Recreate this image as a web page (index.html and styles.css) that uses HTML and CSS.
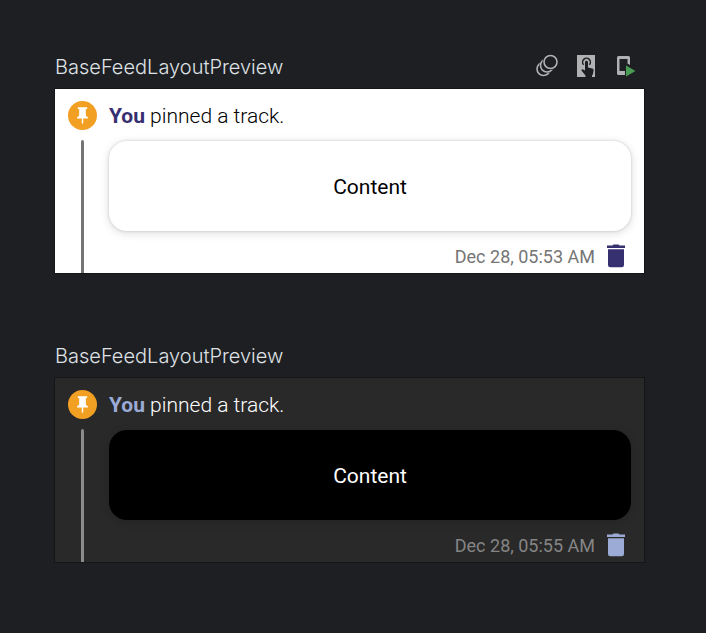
FILE: index.html
```html
<!DOCTYPE html>
<html lang="en">
<head>
  <meta charset="UTF-8">
  <title>BaseFeedLayoutPreview</title>
  <link rel="stylesheet" href="styles.css">
</head>
<body>

  <svg class="symbols" aria-hidden="true">
    <symbol id="pin" viewBox="0 0 28 28">
      <circle cx="14" cy="14" r="14" fill="#f2a024"/>
      <path d="M9.500 6h9v1.800h-1.300v5.200c0 1.400.8 2.200 2 2.400v1.400h-4.500v4.400l-.7 1-.7-1v-4.400H8.800v-1.400c1.200-.2 2-1 2-2.400V7.800H9.500z" fill="#fff"/>
    </symbol>
    <symbol id="trash" viewBox="0 0 18 24">
      <path d="M5.500 1.500 6.500.5h5l1 1H18V4H0V1.500z" fill="currentColor"/>
      <path d="M1 5.300h16V21a2.300 2.300 0 0 1-2.300 2.300H3.300A2.300 2.300 0 0 1 1 21z" fill="currentColor"/>
    </symbol>
  </svg>

  <main class="previews">
    <section class="preview">
      <header class="preview-header">
        <h2 class="preview-title">BaseFeedLayoutPreview</h2>
        <div class="toolbar">
          <button class="tool" aria-label="Animation preview">
            <svg viewBox="0 0 24 24">
              <g fill="#1e1f22" stroke="#afb1b3" stroke-width="1.600">
                <circle cx="9.500" cy="15" r="6.500"/>
                <circle cx="13" cy="11.500" r="7.600" stroke="none"/>
                <circle cx="13" cy="11.500" r="6.500"/>
                <circle cx="16.500" cy="8" r="8" stroke="none"/>
                <circle cx="16.500" cy="8" r="6.500"/>
              </g>
            </svg>
          </button>
          <button class="tool" aria-label="Interactive mode">
            <svg viewBox="0 0 24 24">
              <path d="M3 1h18v22H3z" fill="#afb1b3"/>
              <path d="M9.600 10.800A3.900 3.900 0 1 1 15.400 10.800" fill="none" stroke="#1e1f22" stroke-width="1.500"/>
              <path d="M11 8.200c0-.9.600-1.500 1.500-1.500s1.500.6 1.500 1.500v5.300l4.200 1c1 .2 1.500.9 1.400 1.800L19 20c-.2.700-.5 1.100-1 1.500V23h-6.500v-1.500L7.600 16.800c-.5-.9.600-2 1.500-1.400l1.900 1.100z" fill="#1e1f22"/>
            </svg>
          </button>
          <button class="tool" aria-label="Run preview">
            <svg viewBox="0 0 24 24">
              <path d="M4.500 2h10A1.500 1.500 0 0 1 16 3.500V11l-2.500-1.500V5h-8v12H11v4H4.500A1.500 1.500 0 0 1 3 19.500v-16A1.500 1.500 0 0 1 4.500 2z" fill="#afb1b3"/>
              <path d="M12 11.500v11l9.500-5.500z" fill="#499c54"/>
            </svg>
          </button>
        </div>
      </header>
      <article class="feed light">
        <div class="feed-side">
          <svg class="pin"><use href="#pin"/></svg>
          <div class="line"></div>
        </div>
        <div class="feed-main">
          <p class="feed-text"><b class="user">You</b> pinned a track.</p>
          <div class="card">Content</div>
          <div class="feed-footer">
            <time>Dec 28, 05:53 AM</time>
            <button class="delete" aria-label="Delete"><svg><use href="#trash"/></svg></button>
          </div>
        </div>
      </article>
    </section>

    <section class="preview">
      <header class="preview-header">
        <h2 class="preview-title">BaseFeedLayoutPreview</h2>
      </header>
      <article class="feed dark">
        <div class="feed-side">
          <svg class="pin"><use href="#pin"/></svg>
          <div class="line"></div>
        </div>
        <div class="feed-main">
          <p class="feed-text"><b class="user">You</b> pinned a track.</p>
          <div class="card">Content</div>
          <div class="feed-footer">
            <time>Dec 28, 05:55 AM</time>
            <button class="delete" aria-label="Delete"><svg><use href="#trash"/></svg></button>
          </div>
        </div>
      </article>
    </section>
  </main>

</body>
</html>
```

FILE: styles.css
```css
* {
  box-sizing: border-box;
}
body {
  margin: 0;
  background: #1e1f22;
  font-family: Roboto, sans-serif;
}
button {
  padding: 0;
  border: none;
  background: none;
  color: inherit;
  cursor: pointer;
}
svg {
  display: block;
}
.symbols {
  display: none;
}
.previews {
  display: flex;
  flex-direction: column;
  gap: 67px;
  padding: 52px 61px 67px 54px;
}
.preview-header {
  display: flex;
  justify-content: space-between;
  height: 36px;
  padding: 0 7px 0 1px;
}
.preview-title {
  margin: 0;
  color: #dfe1e5;
  font: 300 20px/30px Inter, sans-serif;
}
.toolbar {
  display: flex;
  gap: 16px;
  padding-top: 2px;
}
.tool,
.tool svg {
  width: 24px;
  height: 24px;
}
.feed {
  display: flex;
  gap: 12px;
  border: 1px solid #141517;
  padding: 12px 13px 0;
  overflow: hidden;
}
.feed-side {
  display: flex;
  flex-direction: column;
  align-items: center;
  gap: 10px;
}
.pin {
  width: 29px;
  height: 29px;
}
.line {
  flex: 1;
  width: 3px;
  border-radius: 2px 2px 0 0;
}
.feed-main {
  flex: 1;
}
.feed-text {
  margin: 0;
  font-size: 21px;
  font-weight: 300;
  line-height: 30px;
}
.user {
  font-weight: 700;
}
.card {
  display: flex;
  align-items: center;
  justify-content: center;
  height: 90px;
  margin-top: 10px;
  padding-top: 2px;
  border-radius: 18px;
  font-size: 21px;
}
.feed-footer {
  display: flex;
  align-items: center;
  justify-content: flex-end;
  gap: 12px;
  height: 42px;
  padding: 8px 6px 0 0;
  font-size: 18px;
}
.delete,
.delete svg {
  width: 18px;
  height: 24px;
}

.light {
  background: #fff;
  color: #000;
}
.light .user,
.light .delete {
  color: #362f70;
}
.light .line {
  background: #747474;
}
.light .card {
  background: #fff;
  box-shadow: 0 0 3px rgba(0, 0, 0, 0.16), 0 2px 10px rgba(0, 0, 0, 0.14);
}
.light time {
  color: #757575;
}

.dark {
  background: #292929;
  color: #fff;
}
.dark .user,
.dark .delete {
  color: #9babd6;
}
.dark .line {
  background: #8b8b8b;
}
.dark .card {
  background: #000;
  box-shadow: 0 2px 8px rgba(0, 0, 0, 0.15);
}
.dark time {
  color: #858585;
}
```
